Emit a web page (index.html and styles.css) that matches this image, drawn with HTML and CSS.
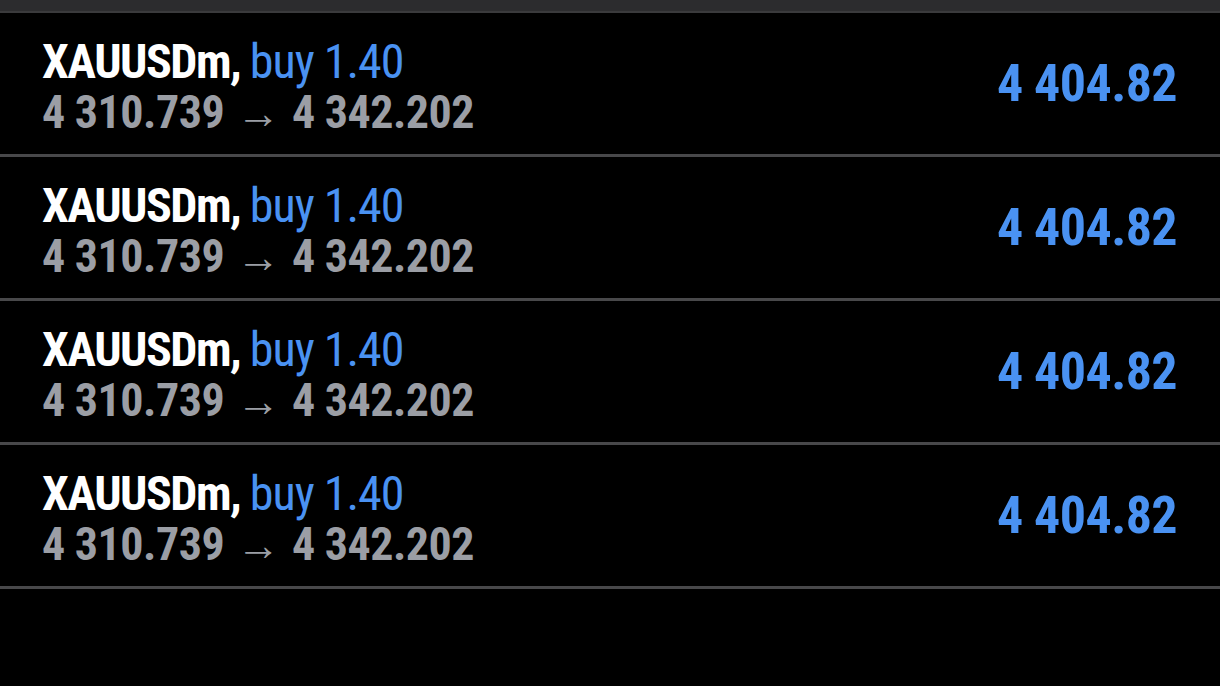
FILE: index.html
```html
<!DOCTYPE html>
<html lang="en">
<head>
    <meta charset="UTF-8">
    <title>Positions</title>
    <link rel="stylesheet" href="styles.css">
</head>
<body>
    <div class="topbar"></div>
    <div class="list">
        <div class="row">
            <div class="info">
                <div class="title">XAUUSDm, <span class="side">buy 1.40</span></div>
                <div class="prices">4 310.739 <span class="arrow">&rarr;</span> 4 342.202</div>
            </div>
            <div class="profit">4 404.82</div>
        </div>
        <div class="row">
            <div class="info">
                <div class="title">XAUUSDm, <span class="side">buy 1.40</span></div>
                <div class="prices">4 310.739 <span class="arrow">&rarr;</span> 4 342.202</div>
            </div>
            <div class="profit">4 404.82</div>
        </div>
        <div class="row">
            <div class="info">
                <div class="title">XAUUSDm, <span class="side">buy 1.40</span></div>
                <div class="prices">4 310.739 <span class="arrow">&rarr;</span> 4 342.202</div>
            </div>
            <div class="profit">4 404.82</div>
        </div>
        <div class="row">
            <div class="info">
                <div class="title">XAUUSDm, <span class="side">buy 1.40</span></div>
                <div class="prices">4 310.739 <span class="arrow">&rarr;</span> 4 342.202</div>
            </div>
            <div class="profit">4 404.82</div>
        </div>
    </div>
</body>
</html>
```

FILE: styles.css
```css
body {
    margin: 0;
    background: #000;
    font-family: Roboto, "Liberation Sans", sans-serif;
    font-stretch: 75%;
}
.topbar {
    height: 11px;
    background: #2c2c2e;
    border-bottom: 2px solid #3a3a3c;
}
.row {
    display: flex;
    align-items: center;
    justify-content: space-between;
    height: 141px;
    padding: 0 43px 0 42px;
    border-bottom: 3px solid #48484a;
}
.info {
    line-height: 51px;
    padding-top: 8px;
}
.title {
    color: #fff;
    font-size: 48px;
    font-weight: 700;
    letter-spacing: -1.5px;
}
.side {
    color: #4a92f2;
    font-weight: 400;
    letter-spacing: -1px;
}
.prices {
    color: #9b9ea5;
    font-size: 46px;
    font-weight: 700;
    letter-spacing: -0.5px;
}
.arrow {
    font-weight: 400;
    font-size: 44px;
    margin: 0 2px;
}
.profit {
    color: #4a92f2;
    font-size: 52px;
    font-weight: 700;
    letter-spacing: -0.6px;
}
```
